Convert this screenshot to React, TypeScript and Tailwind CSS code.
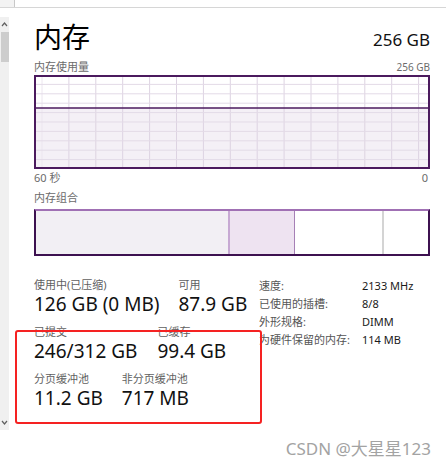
import React from "react";

const FONT = "font-[family-name:'Noto_Sans','Noto_Sans_CJK_SC',sans-serif]";

function UsageGraph() {
  const vx: number[] = [];
  for (let k = 0; k < 15; k++) vx.push(6 + k * 26.9);
  const hy: number[] = [];
  for (let k = 1; k < 10; k++) hy.push(k * 9.4);
  return (
    <svg width="392" height="90" className="block" viewBox="0 0 392 90">
      <rect x="0" y="0" width="392" height="90" fill="#ffffff" />
      <rect x="0" y="31" width="392" height="59" fill="#f4f0f6" />
      {vx.map((x, i) => (
        <line key={"v" + i} x1={x} y1={0} x2={x} y2={90} stroke={i === 0 ? "#ece6ef" : "#ddd3e2"} strokeWidth="1" />
      ))}
      {hy.map((y, i) => (
        <line key={"h" + i} x1={0} y1={y - 2} x2={392} y2={y - 2} stroke="#e3dbe7" strokeWidth="1" />
      ))}
      <line x1="0" y1="31" x2="392" y2="31" stroke="#4b1a5e" strokeWidth="1.6" />
    </svg>
  );
}

function Stat({ label, value }: { label: string; value: string }) {
  return (
    <div className="flex flex-col">
      <div className="text-[11px] leading-[15px] text-[#5f5f5f]">{label}</div>
      <div className="text-[19px] leading-[24px] text-[#111]">{value}</div>
    </div>
  );
}

function Row({ label, value }: { label: string; value: string }) {
  return (
    <div className="flex h-[18px] items-center text-[11px]">
      <div className="w-[103px] text-[#555]">{label}</div>
      <div className="text-[#1a1a1a]">{value}</div>
    </div>
  );
}

export default function App() {
  return (
    <div className={`relative w-[446px] h-[469px] bg-white overflow-hidden ${FONT}`}>
      <div className="h-[8px] border-b border-[#d6d6d6] flex">
        <div className="w-[15px] bg-[#f3f3f3] border-r border-[#c8c8c8]" />
      </div>
      <div className="flex">
        <div className="mt-[9px] w-[9px] h-[413px] bg-[#f0f0f0] flex flex-col items-center">
          <svg width="9" height="14" viewBox="0 0 9 14" className="block">
            <path d="M2 9 L4.5 6 L7 9" fill="none" stroke="#606060" strokeWidth="1.2" />
          </svg>
          <div className="mt-[1px] w-[8px] h-[30px] bg-[#cdcdcd]" />
          <div className="flex-1" />
          <svg width="9" height="14" viewBox="0 0 9 14" className="block">
            <path d="M2 5 L4.5 8 L7 5" fill="none" stroke="#606060" strokeWidth="1.2" />
          </svg>
        </div>
        <div className="ml-[25px] w-[396px] flex flex-col">
          <div className="mt-[10px] flex items-end justify-between">
            <div className="text-[28px] leading-[38px] text-black">内存</div>
            <div className="text-[17px] leading-[24px] text-[#111] mb-[4px]">256 GB</div>
          </div>
          <div className="mt-[4px] flex justify-between text-[11px] leading-[14px] text-[#6b6b6b]">
            <span>内存使用量</span>
            <span className="text-[10px]">256 GB</span>
          </div>
          <div className="mt-[1px] h-[94px] border-2 border-[#4b1a5e]">
            <UsageGraph />
          </div>
          <div className="mt-[1px] flex justify-between text-[11px] leading-[16px] text-[#6b6b6b]">
            <span>60 秒</span>
            <span className="mr-[2px]">0</span>
          </div>
          <div className="mt-[4px] text-[11px] leading-[16px] text-[#6b6b6b]">内存组合</div>
          <div className="mt-[3px] h-[47px] flex border-2 border-[#3d1150] border-t-[#a070b4]">
            <div className="w-[194px] bg-[#f2eff4] border-r-2 border-[#c7a9d3]" />
            <div className="w-[65px] bg-[#eee3f1] border-r border-[#a680b6]" />
            <div className="w-[89px] bg-white border-r-2 border-[#d4d4d4]" />
            <div className="flex-1 bg-white" />
          </div>
          <div className="mt-[21px] flex">
            <div className="w-[225px] flex flex-col gap-[8px]">
              <div className="flex gap-[19px]">
                <Stat label="使用中(已压缩)" value="126 GB (0 MB)" />
                <Stat label="可用" value="87.9 GB" />
              </div>
              <div className="flex gap-[20px]">
                <Stat label="已提交" value="246/312 GB" />
                <Stat label="已缓存" value="99.4 GB" />
              </div>
              <div className="flex gap-[19px]">
                <Stat label="分页缓冲池" value="11.2 GB" />
                <Stat label="非分页缓冲池" value="717 MB" />
              </div>
            </div>
            <div className="flex flex-col">
              <Row label="速度:" value="2133 MHz" />
              <Row label="已使用的插槽:" value="8/8" />
              <Row label="外形规格:" value="DIMM" />
              <Row label="为硬件保留的内存:" value="114 MB" />
            </div>
          </div>
        </div>
      </div>
      <div className="absolute left-[15px] top-[330px] w-[247px] h-[94px] border-2 border-[#f52222] rounded-[3px]" />
      <div className="absolute right-[15px] top-[437px] text-[17px] leading-[24px] text-[#a3a3a3]">CSDN @大星星123</div>
    </div>
  );
}
